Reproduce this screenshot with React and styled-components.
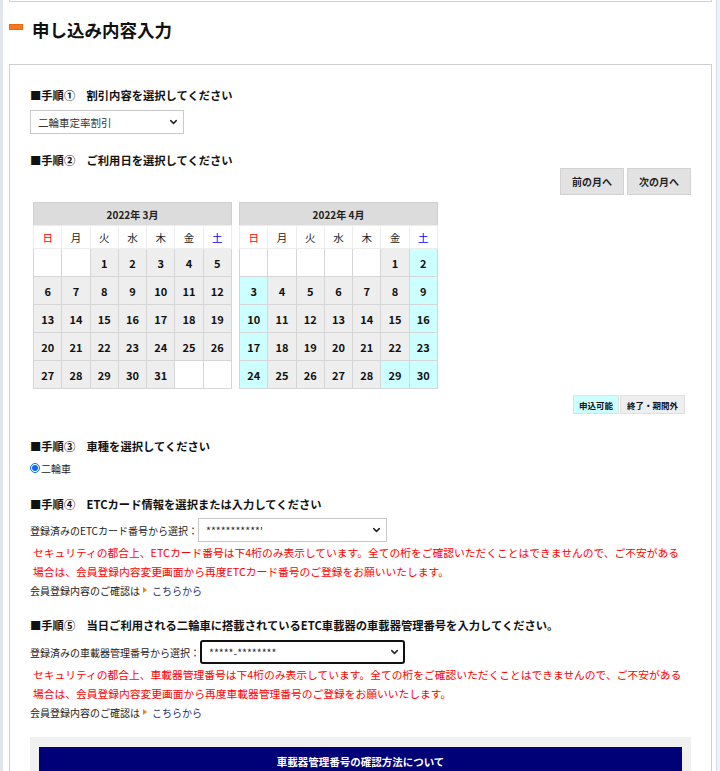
import React from "react";
import styled, { createGlobalStyle } from "styled-components";
import { ChevronDown } from "lucide-react";

const GlobalStyle = createGlobalStyle`
	body {
		margin: 0;
		background: #fff;
		font-family: "Noto Sans CJK JP", "Noto Sans", sans-serif;
		color: #1a1a1a;
	}
`;

const WEEK = [
	{ label: "日", color: "#ff0000" },
	{ label: "月" },
	{ label: "火" },
	{ label: "水" },
	{ label: "木" },
	{ label: "金" },
	{ label: "土", color: "#0000ff" },
];

const HOLIDAYS = { 4: [29] };

function buildWeeks(month, firstDay, days) {
	const cells = [];
	for (let i = 0; i < firstDay; i++) cells.push(null);
	for (let d = 1; d <= days; d++) {
		const dow = (firstDay + d - 1) % 7;
		let open = false;
		if (month === 4) {
			open = dow === 0 || dow === 6 || (HOLIDAYS[4] || []).includes(d);
		}
		cells.push({ day: d, open });
	}
	while (cells.length % 7) cells.push(null);
	const weeks = [];
	for (let i = 0; i < cells.length; i += 7) weeks.push(cells.slice(i, i + 7));
	return weeks;
}

const MONTHS = [
	{ title: "2022年 3月", weeks: buildWeeks(3, 2, 31) },
	{ title: "2022年 4月", weeks: buildWeeks(4, 5, 30) },
];

function Calendar({ title, weeks }) {
	return (
		<CalTable>
			<thead>
				<tr>
					<MonthHead colSpan={7}>{title}</MonthHead>
				</tr>
				<tr>
					{WEEK.map((w) => (
						<WeekDay key={w.label} $color={w.color}>
							{w.label}
						</WeekDay>
					))}
				</tr>
			</thead>
			<tbody>
				{weeks.map((week, i) => (
					<tr key={i}>
						{week.map((cell, j) => (
							<DayCell
								key={j}
								$kind={!cell ? "empty" : cell.open ? "open" : "closed"}
							>
								{cell ? cell.day : ""}
							</DayCell>
						))}
					</tr>
				))}
			</tbody>
		</CalTable>
	);
}

function SelectBox({ width, value, focused }) {
	return (
		<SelectWrap $w={width}>
			<Select $focused={focused} defaultValue={value}>
				<option value={value}>{value}</option>
			</Select>
			<Chevron size={11} strokeWidth={3.2} />
		</SelectWrap>
	);
}

function ConfirmLink() {
	return (
		<Confirm>
			会員登録内容のご確認は
			<Arrow />
			<LinkText href="#">こちらから</LinkText>
		</Confirm>
	);
}

export default function App() {
	return (
		<>
			<GlobalStyle />
			<Page>
				<LeftStrip />
				<Main>
					<TopPanel />
					<PageTitle>
						<TitleMark />
						申し込み内容入力
					</PageTitle>
					<FormBox>
						<StepTitle>■手順①　割引内容を選択してください</StepTitle>
						<SelectRow $mt={6}>
							<SelectBox width={154} value="二輪車定率割引" />
						</SelectRow>

						<StepTitle $mt={17}>■手順②　ご利用日を選択してください</StepTitle>
						<MonthNav>
							<NavButton type="button">前の月へ</NavButton>
							<NavButton type="button">次の月へ</NavButton>
						</MonthNav>
						<Calendars>
							{MONTHS.map((m) => (
								<Calendar key={m.title} title={m.title} weeks={m.weeks} />
							))}
						</Calendars>
						<Legend>
							<LegendItem $open>申込可能</LegendItem>
							<LegendItem>終了・期間外</LegendItem>
						</Legend>

						<StepTitle $mt={23}>■手順③　車種を選択してください</StepTitle>
						<RadioRow>
							<Radio type="radio" name="car" defaultChecked />
							二輪車
						</RadioRow>

						<StepTitle $mt={18}>
							■手順④　ETCカード情報を選択または入力してください
						</StepTitle>
						<SelectRow $mt={5}>
							<FieldLabel>登録済みのETCカード番号から選択：</FieldLabel>
							<SelectBox width={189} value="***********'" />
						</SelectRow>
						<Notice>
							セキュリティの都合上、ETCカード番号は下4桁のみ表示しています。全ての桁をご確認いただくことはできませんので、ご不安がある
							<br />
							場合は、会員登録内容変更画面から再度ETCカード番号のご登録をお願いいたします。
						</Notice>
						<ConfirmLink />

						<StepTitle $mt={17}>
							■手順⑤　当日ご利用される二輪車に搭載されているETC車載器の車載器管理番号を入力してください。
						</StepTitle>
						<SelectRow $mt={6}>
							<FieldLabel>登録済みの車載器管理番号から選択：</FieldLabel>
							<SelectBox width={205} value="*****-********" focused />
						</SelectRow>
						<Notice>
							セキュリティの都合上、車載器管理番号は下4桁のみ表示しています。全ての桁をご確認いただくことはできませんので、ご不安がある
							<br />
							場合は、会員登録内容変更画面から再度車載器管理番号のご登録をお願いいたします。
						</Notice>
						<ConfirmLink />

						<HelpBox>
							<HelpBar>車載器管理番号の確認方法について</HelpBar>
							<HelpBody />
						</HelpBox>
					</FormBox>
				</Main>
				<RightStrip />
			</Page>
		</>
	);
}

const Page = styled.div`
	display: flex;
	min-height: 771px;
	overflow: hidden;
`;

const LeftStrip = styled.div`
	width: 3px;
	flex-shrink: 0;
	background: #e2e7ee;
`;

const RightStrip = styled.div`
	width: 4px;
	flex-shrink: 0;
	background: #eef1f5;
	border-left: 1px solid #d9dee5;
	box-sizing: border-box;
`;

const Main = styled.div`
	flex: 1;
	padding: 0 4px 0 6px;
	min-width: 0;
`;

const TopPanel = styled.div`
	height: 1px;
	border: 1px solid #d2d2d2;
	border-top: none;
`;

const PageTitle = styled.h1`
	display: flex;
	align-items: flex-start;
	margin: 16px 0 22px;
	font-size: 17.5px;
	line-height: 24px;
	font-weight: 700;
	color: #111;
`;

const TitleMark = styled.span`
	width: 14px;
	height: 6px;
	margin: 6px 9px 0 0;
	background: #f47a1f;
	box-shadow: inset 0 0 0 1px #e86a10;
`;

const FormBox = styled.section`
	border: 1px solid #cfcfcf;
	border-bottom: none;
	padding: 21px 20px 0;
`;

const StepTitle = styled.h3`
	margin: ${(p) => p.$mt || 0}px 0 0;
	font-size: 11.3px;
	line-height: 18px;
	font-weight: 700;
	color: #111;
	white-space: nowrap;
`;

const SelectRow = styled.div`
	display: flex;
	align-items: center;
	margin-top: ${(p) => p.$mt || 0}px;
`;

const FieldLabel = styled.span`
	font-size: 10px;
	color: #222;
	white-space: nowrap;
`;

const SelectWrap = styled.div`
	position: relative;
	display: flex;
	width: ${(p) => p.$w}px;
`;

const Select = styled.select`
	appearance: none;
	width: 100%;
	height: 24px;
	margin: 0;
	padding: 0 20px 0 7px;
	box-sizing: border-box;
	background: #fff;
	font-family: inherit;
	font-size: 10.5px;
	color: #333;
	border: ${(p) => (p.$focused ? "2px solid #111" : "1px solid #c9c9c9")};
	border-radius: ${(p) => (p.$focused ? "3px" : "0")};
	outline: none;
`;

const Chevron = styled(ChevronDown)`
	position: absolute;
	right: 5px;
	top: 50%;
	transform: translateY(-50%);
	color: #222;
	pointer-events: none;
`;

const MonthNav = styled.div`
	display: flex;
	justify-content: flex-end;
	gap: 3px;
	margin-top: -1px;
`;

const NavButton = styled.button`
	width: 64px;
	height: 27px;
	padding: 0;
	background: #e2e2e2;
	border: 1px solid #d2d2d2;
	font-family: inherit;
	font-size: 10px;
	font-weight: 700;
	color: #222;
	cursor: pointer;
`;

const Calendars = styled.div`
	display: flex;
	align-items: flex-start;
	gap: 7px;
	margin: 7px 0 0 3px;
`;

const CalTable = styled.table`
	width: 199px;
	border-collapse: collapse;
	table-layout: fixed;
	border: 1px solid #d0d0d0;
`;

const MonthHead = styled.th`
	height: 22px;
	padding: 0;
	background: #dcdcdc;
	font-size: 10px;
	font-weight: 700;
	color: #222;
`;

const WeekDay = styled.th`
	height: 22px;
	padding: 0;
	background: #fff;
	border: 1px solid #ededed;
	font-size: 10.5px;
	font-weight: 400;
	color: ${(p) => p.$color || "#222"};
`;

const DayCell = styled.td`
	height: 27px;
	padding: 0;
	text-align: center;
	border: 1px solid #d6d6d6;
	background: ${(p) =>
		p.$kind === "open" ? "#ccffff" : p.$kind === "closed" ? "#eeeeee" : "#fff"};
	font-size: 11px;
	font-weight: 700;
	color: #111;
`;

const Legend = styled.div`
	display: flex;
	justify-content: flex-end;
	gap: 1px;
	margin-top: 6px;
	padding-right: 6px;
`;

const LegendItem = styled.span`
	display: flex;
	align-items: center;
	height: 19px;
	padding: 0 ${(p) => (p.$open ? 5 : 6)}px;
	box-sizing: border-box;
	background: ${(p) => (p.$open ? "#ccffff" : "#eeeeee")};
	border: 1px solid #e0e0e0;
	font-size: 8.5px;
	font-weight: 700;
	color: #111;
`;

const RadioRow = styled.label`
	display: flex;
	align-items: center;
	margin-top: 4px;
	height: 18px;
	font-size: 10px;
	color: #222;
`;

const Radio = styled.input`
	width: 10px;
	height: 10px;
	margin: 0 1px 0 0;
	accent-color: #0a6cf0;
`;

const Notice = styled.p`
	margin: 1px 0 0 3px;
	font-size: 10.75px;
	line-height: 19px;
	color: #ff0000;
	white-space: nowrap;
`;

const Confirm = styled.div`
	display: flex;
	align-items: center;
	height: 18px;
	font-size: 10px;
	color: #222;
`;

const Arrow = styled.span`
	width: 0;
	height: 0;
	margin: 0 5px 0 3px;
	border-left: 4px solid #f08020;
	border-top: 3px solid transparent;
	border-bottom: 3px solid transparent;
`;

const LinkText = styled.a`
	color: #1b2f6e;
	text-decoration: none;
`;

const HelpBox = styled.div`
	margin-top: 16px;
	padding: 10px 9px;
	background: #f0f0f0;
`;

const HelpBar = styled.div`
	height: 28px;
	display: flex;
	align-items: center;
	justify-content: center;
	background: #000077;
	color: #fff;
	font-size: 10.5px;
	font-weight: 700;
`;

const HelpBody = styled.div`
	height: 60px;
	background: #fff;
`;
